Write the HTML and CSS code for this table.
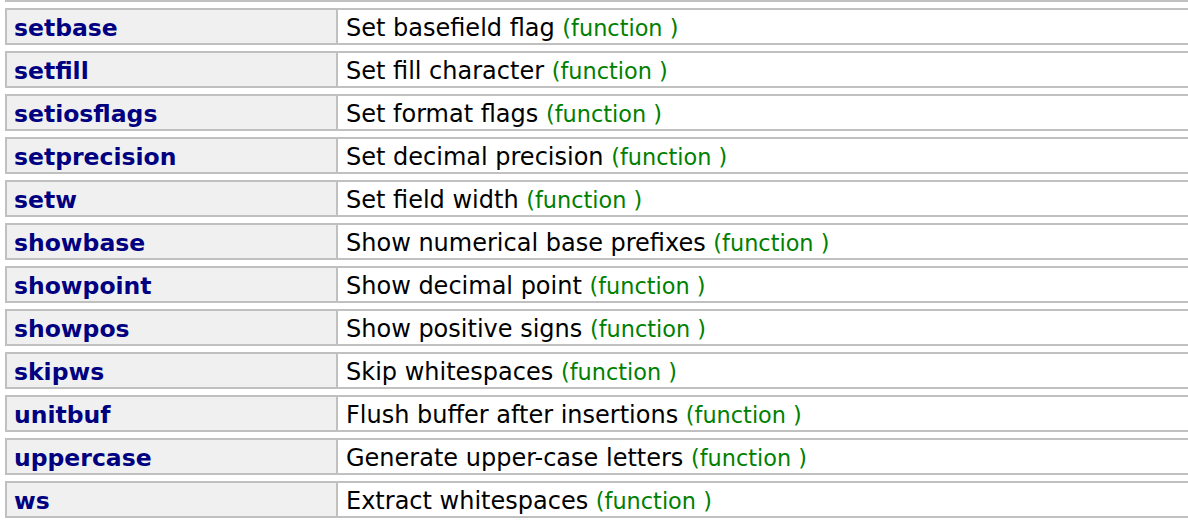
FILE: index.html
```html
<!DOCTYPE html>
<html>
<head>
<meta charset="utf-8">
<link rel="stylesheet" href="styles.css">
</head>
<body>
<div class="list">
  <div class="row"><div class="name">setbase</div><div class="desc">Set basefield flag <span class="kind">(function )</span></div></div>
  <div class="row"><div class="name">setfill</div><div class="desc">Set fill character <span class="kind">(function )</span></div></div>
  <div class="row"><div class="name">setiosflags</div><div class="desc">Set format flags <span class="kind">(function )</span></div></div>
  <div class="row"><div class="name">setprecision</div><div class="desc">Set decimal precision <span class="kind">(function )</span></div></div>
  <div class="row"><div class="name">setw</div><div class="desc">Set field width <span class="kind">(function )</span></div></div>
  <div class="row"><div class="name">showbase</div><div class="desc">Show numerical base prefixes <span class="kind">(function )</span></div></div>
  <div class="row"><div class="name">showpoint</div><div class="desc">Show decimal point <span class="kind">(function )</span></div></div>
  <div class="row"><div class="name">showpos</div><div class="desc">Show positive signs <span class="kind">(function )</span></div></div>
  <div class="row"><div class="name">skipws</div><div class="desc">Skip whitespaces <span class="kind">(function )</span></div></div>
  <div class="row"><div class="name">unitbuf</div><div class="desc">Flush buffer after insertions <span class="kind">(function )</span></div></div>
  <div class="row"><div class="name">uppercase</div><div class="desc">Generate upper-case letters <span class="kind">(function )</span></div></div>
  <div class="row"><div class="name">ws</div><div class="desc">Extract whitespaces <span class="kind">(function )</span></div></div>
</div>
</body>
</html>
```
FILE: styles.css
```css
html, body {
  margin: 0;
  padding: 0;
  overflow: hidden;
  background: #ffffff;
}
body {
  font-family: "DejaVu Sans", Verdana, sans-serif;
  font-size: 24px;
  color: #000000;
}
.list {
  margin-left: 5px;
  width: 1210px;
  display: flex;
  flex-direction: column;
  gap: 6px;
}
.list::before {
  content: "";
  display: block;
  height: 2px;
  background: #c0c0c0;
}
.row {
  display: flex;
  border: 2px solid #c0c0c0;
  height: 37px;
  box-sizing: border-box;
  line-height: 28px;
}
.name {
  width: 331px;
  flex: none;
  box-sizing: border-box;
  background: #f0f0f0;
  border-right: 2px solid #c0c0c0;
  padding: 4px 0 0 7px;
  font-weight: bold;
  font-size: 23.5px;
  color: #000080;
}
.desc {
  flex: 1;
  padding: 4px 0 0 8px;
  white-space: nowrap;
}
.kind {
  color: #008000;
  font-size: 22.4px;
}
```
